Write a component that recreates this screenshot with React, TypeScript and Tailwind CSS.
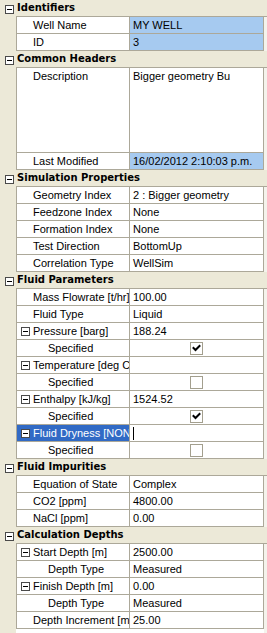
import React from "react";

type Row =
  | { kind: "cat"; label: string }
  | {
      kind: "prop";
      label: string;
      value?: string;
      level?: 0 | 1 | 2;
      box?: boolean;
      hl?: boolean;
      check?: boolean | null;
      tall?: boolean;
      selected?: boolean;
    };

const rows: Row[] = [
  { kind: "cat", label: "Identifiers" },
  { kind: "prop", label: "Well Name", value: "MY WELL", hl: true },
  { kind: "prop", label: "ID", value: "3", hl: true },
  { kind: "cat", label: "Common Headers" },
  { kind: "prop", label: "Description", value: "Bigger geometry Bu", tall: true },
  { kind: "prop", label: "Last Modified", value: "16/02/2012 2:10:03 p.m.", hl: true },
  { kind: "cat", label: "Simulation Properties" },
  { kind: "prop", label: "Geometry Index", value: "2 : Bigger geometry" },
  { kind: "prop", label: "Feedzone Index", value: "None" },
  { kind: "prop", label: "Formation Index", value: "None" },
  { kind: "prop", label: "Test Direction", value: "BottomUp" },
  { kind: "prop", label: "Correlation Type", value: "WellSim" },
  { kind: "cat", label: "Fluid Parameters" },
  { kind: "prop", label: "Mass Flowrate [t/hr]", value: "100.00" },
  { kind: "prop", label: "Fluid Type", value: "Liquid" },
  { kind: "prop", label: "Pressure [barg]", value: "188.24", box: true },
  { kind: "prop", label: "Specified", level: 2, check: true },
  { kind: "prop", label: "Temperature [deg C]", value: "", box: true },
  { kind: "prop", label: "Specified", level: 2, check: false },
  { kind: "prop", label: "Enthalpy [kJ/kg]", value: "1524.52", box: true },
  { kind: "prop", label: "Specified", level: 2, check: true },
  { kind: "prop", label: "Fluid Dryness [NONE]", value: "", box: true, selected: true },
  { kind: "prop", label: "Specified", level: 2, check: false },
  { kind: "cat", label: "Fluid Impurities" },
  { kind: "prop", label: "Equation of State", value: "Complex" },
  { kind: "prop", label: "CO2 [ppm]", value: "4800.00" },
  { kind: "prop", label: "NaCl [ppm]", value: "0.00" },
  { kind: "cat", label: "Calculation Depths" },
  { kind: "prop", label: "Start Depth [m]", value: "2500.00", box: true },
  { kind: "prop", label: "Depth Type", level: 2, value: "Measured" },
  { kind: "prop", label: "Finish Depth [m]", value: "0.00", box: true },
  { kind: "prop", label: "Depth Type", level: 2, value: "Measured" },
  { kind: "prop", label: "Depth Increment [m]", value: "25.00" },
];

function MinusBox() {
  return (
    <div className="w-[9px] h-[9px] border border-[#4a4a4a] bg-white flex items-center justify-center shrink-0">
      <div className="w-[5px] h-[1px] bg-black" />
    </div>
  );
}

function CheckBox({ checked }: { checked: boolean }) {
  return (
    <div className="w-[13px] h-[13px] border border-[#a39f8e] bg-white flex items-center justify-center">
      {checked && (
        <svg width="9" height="9" viewBox="0 0 9 9">
          <path d="M1.5 4 L3.5 6 L7.5 2" stroke="#000" strokeWidth="2" fill="none" strokeLinecap="square" />
        </svg>
      )}
    </div>
  );
}

export default function App() {
  return (
    <div
      className="w-[267px] h-[633px] bg-white flex flex-col overflow-hidden text-[11px] text-black"
      style={{ fontFamily: '"Liberation Sans", Arial, sans-serif' }}
    >
      {rows.map((r, i) => {
        if (r.kind === "cat") {
          return (
            <div key={i} className="flex h-[17px] shrink-0 bg-[#ECE9D8]">
              <div className="w-[16px] shrink-0 flex items-start pt-[5px] pl-[5px]">
                <MinusBox />
              </div>
              <div
                className="flex-1 border-b border-[#ACA899] pl-[1px] font-bold text-[10px] leading-[16px] whitespace-nowrap overflow-hidden"
                style={{ fontFamily: '"DejaVu Sans", Verdana, sans-serif' }}
              >
                {r.label}
              </div>
            </div>
          );
        }
        const level = r.level ?? 1;
        const pl = level === 2 ? "pl-[31px]" : r.box ? "pl-[4px]" : "pl-[16px]";
        return (
          <div key={i} className={`flex shrink-0 ${r.tall ? "h-[85px]" : "h-[17px]"}`}>
            <div className="w-[16px] shrink-0 bg-[#ECE9D8]" />
            <div
              className={`w-[114px] shrink-0 border-l border-r border-b border-[#ACA899] ${pl} flex items-start overflow-hidden whitespace-nowrap ${
                r.selected ? "bg-[#316AC5] text-white" : "bg-white"
              }`}
            >
              {r.box && (
                <div className="h-[16px] flex items-center mr-[3px]">
                  <MinusBox />
                </div>
              )}
              <span className="leading-[16px]">{r.label}</span>
            </div>
            <div
              className={`w-[134px] shrink-0 border-r border-b border-[#ACA899] overflow-hidden whitespace-nowrap ${
                r.hl ? "bg-[#A6CAF0]" : "bg-white"
              }`}
            >
              {r.check !== undefined && r.check !== null ? (
                <div className="h-[16px] flex items-center justify-center">
                  <CheckBox checked={r.check} />
                </div>
              ) : r.selected ? (
                <div className="h-[16px] flex items-center pl-[3px]">
                  <div className="w-[1px] h-[13px] bg-black" />
                </div>
              ) : (
                <div className="pl-[3px] leading-[16px]">{r.value}</div>
              )}
            </div>
            <div className="flex-1 bg-[#F4F3EC]" />
          </div>
        );
      })}
      <div className="flex flex-1">
        <div className="w-[16px] shrink-0 bg-[#ECE9D8]" />
        <div className="flex-1 bg-white" />
        <div className="w-[3px] bg-[#F4F3EC]" />
      </div>
    </div>
  );
}
